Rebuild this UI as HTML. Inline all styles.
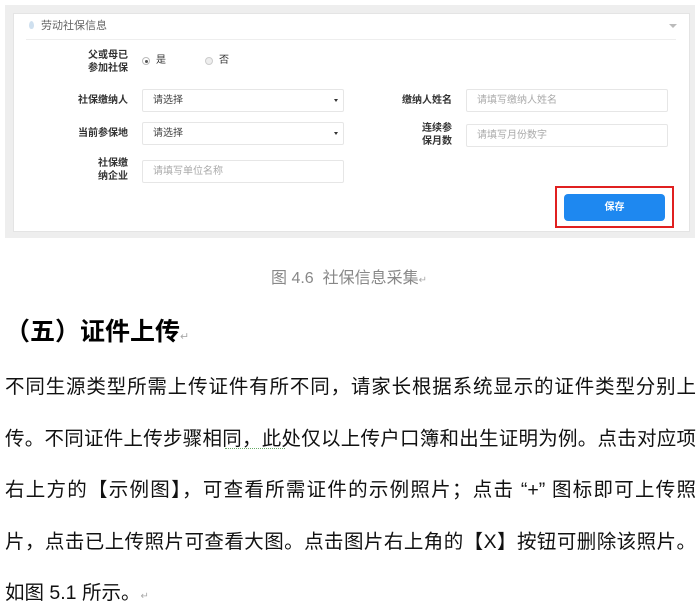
<!DOCTYPE html>
<html><head><meta charset="utf-8">
<style>
*{margin:0;padding:0;box-sizing:border-box}
body{width:698px;height:613px;background:#fff;position:relative;overflow:hidden;font-family:"Liberation Sans","Noto Sans CJK SC",sans-serif;color:#000}
.a{position:absolute}
.lbl{position:absolute;font-size:10px;font-weight:bold;color:#333;text-align:right;line-height:13px}
.inp{position:absolute;border:1px solid #e6e6e6;background:#fff;height:23px;font-size:10px;color:#aaa;padding-left:10px;line-height:21px;border-radius:2px}
.sel{color:#444}
.sel:after{content:"";position:absolute;right:5px;top:9px;border:2.5px solid transparent;border-top:3px solid #333}
.line{position:absolute;left:5px;width:691px;font-size:19.5px;line-height:24px;white-space:nowrap;text-align:justify;text-align-last:justify;color:#111}
</style></head><body>
<div class="a" style="left:5px;top:5px;width:690px;height:233px;background:#eeeeee"></div>
<div class="a" style="left:13px;top:13px;width:677px;height:219px;background:#fff;border:1px solid #e4e4e4"></div>
<div class="a" style="left:29px;top:21px;width:5px;height:8px;background:#cfe0ef;border-radius:50% 50% 50% 50%/60% 60% 40% 40%"></div>
<div class="a" style="left:41px;top:19px;font-size:11px;color:#666;line-height:14px">劳动社保信息</div>
<div class="a" style="left:669px;top:24px;border:4px solid transparent;border-top:4px solid #bbb"></div>
<div class="a" style="left:26px;top:39px;width:650px;height:1px;background:#eee"></div>

<div class="lbl" style="left:60px;width:68px;top:49px">父或母已<br>参加社保</div>
<div class="a" style="left:142px;top:57px;width:8px;height:8px;border:1px solid #bbb;border-radius:50%"></div>
<div class="a" style="left:144.5px;top:59.5px;width:3px;height:3px;background:#555;border-radius:50%"></div>
<div class="a" style="left:156px;top:54px;font-size:10px;color:#333;line-height:13px">是</div>
<div class="a" style="left:205px;top:57px;width:8px;height:8px;border:1px solid #ccc;border-radius:50%;background:#eee"></div>
<div class="a" style="left:219px;top:54px;font-size:10px;color:#333;line-height:13px">否</div>

<div class="lbl" style="left:60px;width:68px;top:94px">社保缴纳人</div>
<div class="inp sel" style="left:142px;top:89px;width:202px">请选择</div>
<div class="lbl" style="left:384px;width:68px;top:94px">缴纳人姓名</div>
<div class="inp" style="left:466px;top:89px;width:202px">请填写缴纳人姓名</div>

<div class="lbl" style="left:60px;width:68px;top:127px">当前参保地</div>
<div class="inp sel" style="left:142px;top:122px;width:202px">请选择</div>
<div class="lbl" style="left:384px;width:68px;top:122px">连续参<br>保月数</div>
<div class="inp" style="left:466px;top:124px;width:202px">请填写月份数字</div>

<div class="lbl" style="left:60px;width:68px;top:157px">社保缴<br>纳企业</div>
<div class="inp" style="left:142px;top:160px;width:202px">请填写单位名称</div>

<div class="a" style="left:555px;top:186px;width:119px;height:42px;border:2px solid #e02020"></div>
<div class="a" style="left:564px;top:194px;width:101px;height:27px;background:#1e88f0;border-radius:4px;color:#fff;font-size:10px;font-weight:bold;text-align:center;line-height:27px">保存</div>

<div class="a" style="left:0;width:698px;top:269px;text-align:center;font-size:16px;color:#888;line-height:20px">图 4.6&nbsp; 社保信息采集<span style="font-size:10px;color:#aaa">↵</span></div>
<div class="a" style="left:5px;top:317px;font-size:25px;font-weight:bold;line-height:30px;color:#000">（五）证件上传<span style="font-size:11px;font-weight:normal;color:#aaa">↵</span></div>

<div class="line" style="top:375px">不同生源类型所需上传证件有所不同，请家长根据系统显示的证件类型分别上</div>
<div class="line" style="top:427px">传。不同证件上传步骤相同，此处仅以上传户口簿和出生证明为例。点击对应项</div>
<div class="line" style="top:478px">右上方的【示例图】，可查看所需证件的示例照片；点击 “+” 图标即可上传照</div>
<div class="line" style="top:530px">片，点击已上传照片可查看大图。点击图片右上角的【X】按钮可删除该照片。</div>
<div class="a" style="left:5px;top:581px;font-size:19.5px;line-height:24px;color:#111">如图 5.1 所示。<span style="font-size:10px;color:#aaa">↵</span></div>
<div class="a" style="left:225px;top:448px;width:60px;border-top:1px dotted #6a6"></div>
</body></html>
